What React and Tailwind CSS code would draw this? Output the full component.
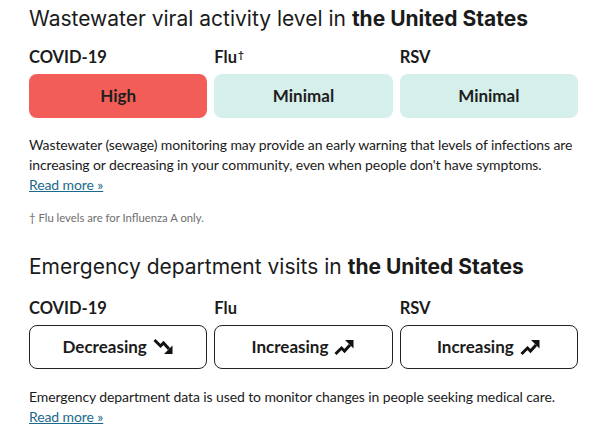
import React from 'react';

const headFont = { fontFamily: 'Inter, "Noto Sans", sans-serif' };

const TrendUp = () => (
  <svg width="21" height="18" viewBox="0 0 21 18" fill="none" className="inline-block">
    <path d="M1.5 16 L7.5 10 L10.5 13 L16 7" stroke="#111" strokeWidth="3" strokeLinejoin="miter" />
    <path d="M11 2 H19.5 V10.5 Z" fill="#111" />
  </svg>
);

const TrendDown = () => (
  <svg width="21" height="18" viewBox="0 0 21 18" fill="none" className="inline-block">
    <path d="M1.5 2 L7.5 8 L10.5 5 L16 11" stroke="#111" strokeWidth="3" strokeLinejoin="miter" />
    <path d="M11 16 H19.5 V7.5 Z" fill="#111" />
  </svg>
);

const wastewater = [
  { name: 'COVID-19', level: 'High', bg: 'bg-[#f35d58]' },
  { name: 'Flu', dagger: true, level: 'Minimal', bg: 'bg-[#d5efeb]' },
  { name: 'RSV', level: 'Minimal', bg: 'bg-[#d5efeb]' },
];

const ed = [
  { name: 'COVID-19', trend: 'Decreasing', Icon: TrendDown },
  { name: 'Flu', trend: 'Increasing', Icon: TrendUp },
  { name: 'RSV', trend: 'Increasing', Icon: TrendUp },
];

export default function App() {
  return (
    <div className="w-[590px] h-[435px] overflow-hidden bg-white text-[#1b1b1b] pl-[29px] pr-[12px] pt-[5px]" style={{ fontFamily: 'Lato, "Open Sans", sans-serif' }}>
      <h2 className="text-[21px] leading-[28px] text-[#1b1b1b]" style={headFont}>
        Wastewater viral activity level in <span className="font-bold">the United States</span>
      </h2>

      <div className="grid grid-cols-3 gap-[7px] mt-[14px]">
        {wastewater.map((d) => (
          <div key={d.name}>
            <div className="text-[16.5px] leading-[20px] font-bold mb-[7px]">
              {d.name}
              {d.dagger && <sup className="text-[10px] ml-[1px]">†</sup>}
            </div>
            <div className={`${d.bg} h-[44px] rounded-[8px] flex items-center justify-center text-[17px] font-bold text-[#1e1e1e]`}>
              {d.level}
            </div>
          </div>
        ))}
      </div>

      <p className="mt-[17px] text-[14px] leading-[20px] tracking-[-0.1px] text-[#1b1b1b]">
        Wastewater (sewage) monitoring may provide an early warning that levels of infections are increasing or decreasing in your community, even when people don't have symptoms.
        <br />
        <a href="#" className="text-[#1a6a8b] underline">Read more »</a>
      </p>

      <p className="mt-[15px] text-[11.3px] leading-[16px] text-[#6e6e6e]">† Flu levels are for Influenza A only.</p>

      <h2 className="mt-[27px] text-[21px] leading-[28px]" style={headFont}>
        Emergency department visits in <span className="font-bold">the United States</span>
      </h2>

      <div className="grid grid-cols-3 gap-[7px] mt-[17px]">
        {ed.map(({ name, trend, Icon }) => (
          <div key={name}>
            <div className="text-[16.5px] leading-[20px] font-bold mb-[7px]">{name}</div>
            <div className="h-[44px] rounded-[8px] border border-[#222] flex items-center justify-center gap-[6px] text-[17px] font-bold">
              <span>{trend}</span>
              <Icon />
            </div>
          </div>
        ))}
      </div>

      <p className="mt-[18px] text-[14px] leading-[20px] tracking-[-0.1px]">
        Emergency department data is used to monitor changes in people seeking medical care.
        <br />
        <a href="#" className="text-[#1a6a8b] underline">Read more »</a>
      </p>
    </div>
  );
}
